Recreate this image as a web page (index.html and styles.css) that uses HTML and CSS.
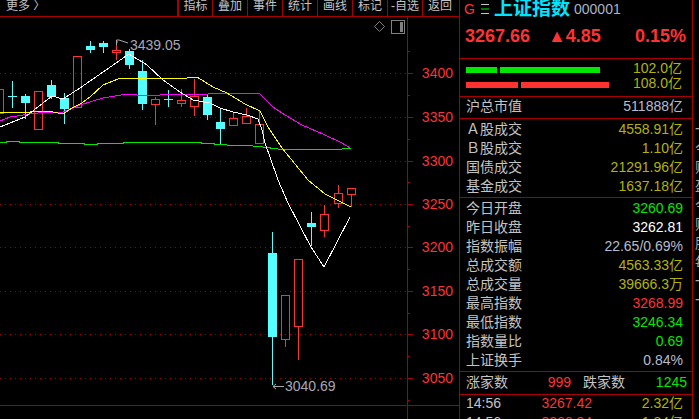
FILE: index.html
```html
<!DOCTYPE html>
<html lang="zh">
<head>
<meta charset="utf-8">
<title>上证指数</title>
<link rel="stylesheet" href="styles.css">
</head>
<body>
<main class="app">
  <section class="chart-pane">
    <nav class="toolbar">
      <span class="tool tool-more">更多 〉</span>
      <span class="tool tool-first">指标</span>
      <span class="tool">叠加</span>
      <span class="tool">事件</span>
      <span class="tool">统计</span>
      <span class="tool">画线</span>
      <span class="tool">标记</span>
      <span class="tool">-自选</span>
      <span class="tool">返回</span>
    </nav>
    <svg class="chart" viewBox="0 17 459 402" width="459" height="402">
      <g class="grid">
        <path d="M0 73.5H407M0 117.5H407M0 161.5H407M0 204.5H407M0 247.5H407M0 291.5H407M0 334.5H407M0 378.5H407"/>
      </g>
      <g class="frame">
        <path d="M407.5 17V419M0 405.5H459"/>
        <path d="M407 73.5H413M407 117.5H413M407 161.5H413M407 204.5H413M407 247.5H413M407 291.5H413M407 334.5H413M407 378.5H413"/>
        <path d="M407 95.5H410M407 139.5H410M407 182.5H410M407 226.5H410M407 269.5H410M407 313.5H410M407 356.5H410M407 51.5H410M407 400.5H410"/>
      </g>
      <g class="axis-labels">
        <text x="453" y="78">3400</text>
        <text x="453" y="122">3350</text>
        <text x="453" y="166">3300</text>
        <text x="453" y="209">3250</text>
        <text x="453" y="252">3200</text>
        <text x="453" y="296">3150</text>
        <text x="453" y="339">3100</text>
        <text x="453" y="383">3050</text>
      </g>
      <g class="widgets">
        <path class="outline" d="M379.5 21.5L384.5 26.5L379.5 31.5L374.5 26.5Z"/>
        <rect class="outline" x="391.5" y="20.5" width="13" height="13"/>
        <rect class="solid" x="400" y="22" width="3" height="10"/>
      </g>
      <g class="up">
        <path d="M-.5 89V113M-4.5 89H3.5V113H-4.5Z"/>
        <rect x="34.5" y="91.5" width="8" height="38"/>
        <rect x="73.5" y="56.5" width="8" height="51"/>
        <path d="M116.5 41V50M116.5 52V60"/><rect x="112.5" y="50.5" width="8" height="2"/>
        <path d="M155.5 97V99M155.5 105V125"/><rect x="151.5" y="99.5" width="8" height="5"/>
        <path d="M181.5 89V100M181.5 103V107"/><rect x="177.5" y="100.5" width="8" height="3"/>
        <path d="M194.5 79V96M194.5 106V116"/><rect x="190.5" y="96.5" width="8" height="10"/>
        <path d="M233.5 112V118"/><rect x="229.5" y="118.5" width="8" height="7"/>
        <path d="M246.5 108V116"/><rect x="242.5" y="116.5" width="8" height="7"/>
        <path d="M259.5 110V124"/><rect x="255.5" y="124.5" width="8" height="19"/>
        <path d="M285.5 339V347"/><rect x="281.5" y="295.5" width="8" height="44"/>
        <path d="M298.5 326V360"/><rect x="294.5" y="259.5" width="8" height="67"/>
        <path d="M324.5 205V214M324.5 230V237"/><rect x="320.5" y="214.5" width="8" height="16"/>
        <path d="M338.5 185V193M338.5 203V208"/><rect x="334.5" y="193.5" width="8" height="10"/>
        <path d="M351.5 194V207"/><rect x="347.5" y="188.5" width="8" height="6"/>
      </g>
      <g class="down">
        <path d="M12.5 81V108M8 96.5H17"/>
        <path d="M25.5 94V119"/><rect x="21" y="96" width="9" height="7"/>
        <path d="M51.5 80V99"/><rect x="47" y="85" width="9" height="12"/>
        <path d="M64.5 93V124"/><rect x="60" y="98" width="9" height="11"/>
        <path d="M90.5 41V53"/><rect x="86" y="46" width="9" height="4"/>
        <path d="M103.5 41V53"/><rect x="99" y="43" width="9" height="4"/>
        <path d="M129.5 49V69"/><rect x="125" y="51" width="9" height="14"/>
        <path d="M142.5 60V110"/><rect x="138" y="71" width="9" height="33"/>
        <path d="M168.5 90V107M164 99.5H173"/>
        <path d="M207.5 95V120"/><rect x="203" y="97" width="9" height="18"/>
        <path d="M220.5 108V144"/><rect x="216" y="122" width="9" height="7"/>
        <path d="M272.5 232V385"/><rect x="268" y="253" width="9" height="84"/>
        <path d="M311.5 212V246"/><rect x="307" y="223" width="9" height="4"/>
      </g>
      <polyline class="ma ma-green" points="0,142 6,142 6,141 19,141 19,142 58,142 58,143 84,143 84,144 97,144 97,143 123,143 123,142 201,142 201,143 214,143 214,144 227,145 253,146 263,147 278,149 342,149 343,148 351,148"/>
      <polyline class="ma ma-magenta" points="0,121 10,117 30,114 47,112 63,112 80,105 103,98 127,94 137,95 160,95 170,94 190,95 227,93 253,93 260,94 273,107 285,115 302,125 325,135 342,143 350,148"/>
      <polyline class="ma ma-yellow" points="0,112 17,113 30,112 35,111 45,111 53,112 63,114 72,108 82,103 90,97 103,85 118,79 127,78 187,78 197,77 213,87 227,93 245,104 260,111 268,127 282,148 308,180 325,194 351,207"/>
      <polyline class="ma ma-white" points="0,127 25,117 52,96 63,99 80,88 129,54 147,65 163,80 180,92 193,100 210,103 220,108 233,112 247,115 258,119 262,130 265,143 270,157 278,180 288,203 311,247 324,267 350,217"/>
      <g class="marks">
        <path d="M116.5 45V40H119M116.5 42H118M119 40L128 43"/>
        <path d="M273 386.5H284M273 386.5L276 384M273 386.5L276 389"/>
        <text x="130" y="50">3439.05</text>
        <text x="285" y="391">3040.69</text>
      </g>
    </svg>
  </section>

  <aside class="quote-pane">
    <header class="quote-head">
      <div class="head-title">
        <span class="badge">G</span>
        <svg class="menu-icon" viewBox="0 0 8 10" width="8" height="10">
          <path class="menu-a" d="M0 .5H8M0 9.5H8"/>
          <path class="menu-b" d="M0 5H8"/>
        </svg>
        <span class="index-name">上证指数</span>
        <span class="index-code">000001</span>
      </div>
      <div class="head-price">
        <span>3267.66</span>
        <span>▲4.85</span>
        <span>0.15%</span>
      </div>
    </header>

    <section class="flow">
      <div class="flow-row">
        <div class="bars">
          <i class="bar bar-in" style="width:31px"></i>
          <i class="bar bar-in" style="width:100px"></i>
        </div>
        <span class="olive">102.0亿</span>
      </div>
      <div class="flow-row">
        <div class="bars">
          <i class="bar bar-out" style="width:52px"></i>
          <i class="bar bar-out" style="width:88px"></i>
        </div>
        <span class="olive">108.0亿</span>
      </div>
    </section>

    <section class="block block-cap">
      <div class="row"><span>沪总市值</span><span class="plain">511888亿</span></div>
    </section>

    <section class="block block-volume">
      <div class="row"><span>Ａ股成交</span><span class="olive">4558.91亿</span></div>
      <div class="row"><span>Ｂ股成交</span><span class="olive">1.10亿</span></div>
      <div class="row"><span>国债成交</span><span class="olive">21291.96亿</span></div>
      <div class="row"><span>基金成交</span><span class="olive">1637.18亿</span></div>
    </section>

    <section class="block block-stats">
      <div class="row"><span>今日开盘</span><span class="green">3260.69</span></div>
      <div class="row"><span>昨日收盘</span><span class="white">3262.81</span></div>
      <div class="row"><span>指数振幅</span><span class="plain">22.65/0.69%</span></div>
      <div class="row"><span>总成交额</span><span class="olive">4563.33亿</span></div>
      <div class="row"><span>总成交量</span><span class="olive">39666.3万</span></div>
      <div class="row"><span>最高指数</span><span class="red">3268.99</span></div>
      <div class="row"><span>最低指数</span><span class="green">3246.34</span></div>
      <div class="row"><span>指数量比</span><span class="green">0.69</span></div>
      <div class="row"><span>上证换手</span><span class="plain">0.84%</span></div>
    </section>

    <section class="block block-breadth">
      <div class="breadth">
        <span>涨家数</span><span class="red num">999</span>
        <span class="breadth-second">跌家数</span><span class="green num">1245</span>
      </div>
    </section>

    <section class="ticks">
      <div class="tick"><span>14:56</span><span class="red tick-price">3267.42</span><span class="olive tick-amount">2.32亿</span></div>
      <div class="tick"><span>14:56</span><span class="red tick-price">3266.94</span><span class="olive tick-amount">1.84亿</span></div>
    </section>
  </aside>

  <aside class="clipped-pane">
    <span>一</span><span>今</span><span>财</span><span>盈</span><span>今</span><span>财</span><span>股</span><span>每</span><span>一</span><span>一</span>
  </aside>
</main>
</body>
</html>
```
FILE: styles.css
```css
* {
  box-sizing: border-box;
}

html,
body {
  margin: 0;
  height: 100%;
  background: #000;
  overflow: hidden;
}

body {
  color: #c4c4c4;
  font: 14px/19px "Liberation Sans", "Noto Sans CJK SC", sans-serif;
}

.app {
  display: flex;
  width: 699px;
  height: 419px;
  overflow: hidden;
}

/* chart side */
.chart-pane {
  flex: 0 0 459px;
  display: flex;
  flex-direction: column;
}

.toolbar {
  display: flex;
  height: 17px;
  border-bottom: 1px solid #a80000;
  font-size: 12px;
  line-height: 12px;
  overflow: hidden;
}

.tool {
  flex: 0 0 35px;
  text-align: center;
  border-left: 1px solid #a80000;
}

.tool-more {
  flex: 0 0 177px;
  border-left: 0;
  padding-left: 6px;
  text-align: left;
}

.tool-first {
  flex: 0 0 35px;
  border-left-width: 2px;
}

.chart {
  display: block;
  flex: none;
}

.grid path {
  fill: none;
  stroke: #a00000;
  stroke-dasharray: 1 4;
  shape-rendering: crispEdges;
}

.frame path {
  fill: none;
  stroke: #a80000;
  shape-rendering: crispEdges;
}

.axis-labels text {
  fill: #ff3232;
  font-size: 14px;
  text-anchor: end;
}

.widgets .outline {
  fill: none;
  stroke: #808080;
}

.widgets .solid {
  fill: #808080;
}

.up path,
.up rect {
  fill: none;
  stroke: #ff3232;
  shape-rendering: crispEdges;
}

.down path {
  fill: none;
  stroke: #54ffff;
  shape-rendering: crispEdges;
}

.down rect {
  fill: #54ffff;
  shape-rendering: crispEdges;
}

.ma {
  fill: none;
  stroke-width: 1;
  shape-rendering: crispEdges;
}

.ma-green {
  stroke: #00e800;
}

.ma-magenta {
  stroke: #ff00ff;
}

.ma-yellow {
  stroke: #ffff00;
}

.ma-white {
  stroke: #fff;
}

.marks path {
  fill: none;
  stroke: #a8a8a8;
}

.marks text {
  fill: #a8a8b4;
  font-size: 14px;
}

/* quote side */
.quote-pane {
  flex: 0 0 234px;
  border-right: 1px solid #a80000;
  border-left: 1px solid #a80000;
  display: flex;
  flex-direction: column;
  height: 419px;
  overflow: hidden;
}

.quote-head {
  flex: 0 0 59px;
  border-bottom: 1px solid #a80000;
}

.head-title {
  display: flex;
  align-items: center;
  height: 20px;
  margin-top: -1px;
  padding-left: 4px;
}

.badge {
  color: #ff3232;
  width: 17px;
}

.menu-icon {
  flex: none;
}

.menu-a {
  stroke: #c4c4c4;
}

.menu-b {
  stroke: #00e800;
}

.index-name {
  margin-left: 5px;
  color: #00e5ff;
  font-size: 19px;
  line-height: 20px;
  width: 80px;
  font-weight: 700;
}

.index-code {
  color: #a8b4c8;
}

.head-price {
  display: grid;
  grid-template-columns: 83px 1fr auto;
  margin-top: 7px;
  padding: 0 6px 0 5px;
  color: #ff3232;
  font-size: 18px;
  line-height: 20px;
  font-weight: 700;
}

.flow {
  flex: 0 0 38px;
  border-bottom: 1px solid #a80000;
  padding: 2px 10px 0 6px;
}

.flow-row {
  display: flex;
  justify-content: space-between;
  align-items: center;
  height: 15px;
}

.bars {
  display: flex;
  gap: 3px;
  margin-top: 2px;
}

.bar {
  display: block;
  height: 6px;
}

.bar-in {
  background: #00e800;
}

.bar-out {
  background: #ff3232;
}

.block {
  border-bottom: 1px solid #a80000;
  padding: 0 9px 0 6px;
}

.block-cap {
  flex: 0 0 22px;
}

.block-volume {
  flex: 0 0 79px;
  padding-top: 1px;
}

.block-stats {
  flex: 0 0 174px;
  padding-top: 1px;
}

.block-breadth {
  flex: 0 0 23px;
  padding-top: 1px;
  padding-right: 5px;
}

.row {
  display: flex;
  justify-content: space-between;
  height: 19px;
}

.breadth {
  display: grid;
  grid-template-columns: 42px 63px 54px 62px;
  height: 19px;
}

.breadth-second {
  padding-left: 12px;
}

.num {
  text-align: right;
}

.ticks {
  padding: 0 9px 0 6px;
}

.tick {
  display: flex;
  height: 19px;
  margin-top: -1px;
  margin-bottom: 1px;
}

.tick-price {
  width: 92px;
  text-align: right;
  flex: none;
}

.tick > span:first-child {
  width: 34px;
}

.tick-amount {
  flex: 1;
  text-align: right;
}

.olive {
  color: #b4b400;
}

.plain {
  color: #b8bccc;
}

.green {
  color: #00e800;
}

.red {
  color: #ff3232;
}

.white {
  color: #fff;
}

/* neighbouring column, almost entirely outside the window */
.clipped-pane {
  flex: 0 0 6px;
  display: flex;
  flex-direction: column;
  padding: 120px 0 0 2px;
  color: #a0a8a8;
  overflow: hidden;
}

.clipped-pane span {
  display: block;
  flex: 0 0 19px;
  width: 14px;
}
```
